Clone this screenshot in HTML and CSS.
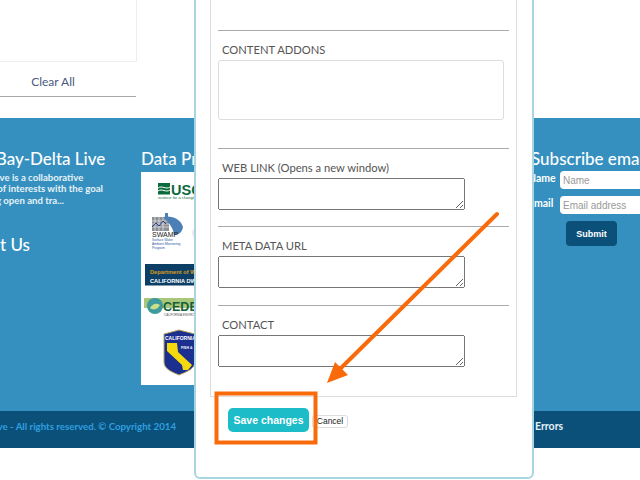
FILE: index.html
```html
<!DOCTYPE html>
<html lang="en">
<head>
    <meta charset="UTF-8">
    <title>Edit Content</title>
    <link rel="stylesheet" href="styles.css">
</head>
<body>
    <div class="top">
        <div class="filter-panel"></div>
        <div class="clear-all">Clear All</div>
    </div>
    <div class="footer-main">
        <div class="col-about">
            <h3>About Bay-Delta Live</h3>
            <p>Bay-Delta Live is a collaborative<br>wide group of interests with the goal<br>of sustaining open and tra...</p>
            <h3 class="contact">Contact Us</h3>
        </div>
        <div class="col-data">
            <h3>Data Providers</h3>
            <div class="logos">
                <svg width="100" height="213" viewBox="141 172 100 213" font-family="'Liberation Sans', sans-serif">
                    <!-- usgs -->
                    <rect x="158" y="183" width="12" height="11.500" fill="#0b6b3d"/>
                    <path d="M158 188c4-3 8 2 12-1M158 191c4-3 8 2 12-1" stroke="#fff" fill="none"/>
                    <text x="171" y="195" font-size="14.500" font-weight="bold" fill="#0b6b3d">USGS</text>
                    <text x="158" y="199" font-size="4" fill="#0b6b3d">science for a changing world</text>
                    <!-- swamp -->
                    <rect x="152" y="217" width="17" height="14" fill="#8d8f96"/>
                    <path d="M152 221h17M152 224h17M152 227h17M155 217v14M159 217v14M163 217v14" stroke="#e8e8e8" stroke-width=".7"/>
                    <path d="M152 227l4-4 3 3 4-5 3 3" stroke="#23408e" fill="none"/>
                    <path d="M163 217c8-2 18 2 20 10-1 6-5 8-9 8 0-5-4-12-11-18z" fill="#4c7fb5"/>
                    <path d="M165 213h3v4h-3z" fill="#4c7fb5"/>
                    <text x="152" y="237" font-size="7" fill="#222">SWAMP</text>
                    <text x="152" y="241" font-size="3.300" fill="#2a5aa0">Surface Water</text>
                    <text x="152" y="245" font-size="3.300" fill="#2a5aa0">Ambient Monitoring</text>
                    <text x="152" y="249" font-size="3.300" fill="#2a5aa0">Program</text>
                    <circle cx="198" cy="233" r="6" fill="#e9e9e9"/>
                    <!-- dwr -->
                    <rect x="145" y="264" width="90" height="21.500" fill="#0d3f66"/>
                    <text x="150" y="273.500" font-size="5.700" font-weight="bold" fill="#d99a1c">Department of Water Resources</text>
                    <text x="150" y="282.500" font-size="5.700" font-weight="bold" fill="#fff">CALIFORNIA DWR</text>
                    <!-- ceden -->
                    <rect x="144" y="298" width="90" height="10" fill="#a9c77a"/>
                    <circle cx="155" cy="306" r="8" fill="#3f9a9e"/>
                    <path d="M150 308c3-5 7-5 10-3-2 4-6 6-10 3z" fill="#c7e08a"/>
                    <text x="163" y="311" font-size="12.500" font-weight="bold" fill="#14603a">CEDEN</text>
                    <text x="164" y="316" font-size="3" fill="#555">CALIFORNIA ENVIRONMENTAL</text>
                    <!-- fish and wildlife -->
                    <path d="M164 334l15-4 16 4v28c0 7-9 10-16 13-7-3-15-6-15-13z" fill="#1b2f8f" stroke="#b8a45a"/>
                    <path d="M167 343h10l1 9 14 13-4 5h-5l-1-5-15-14z" fill="#f5d90f"/>
                    <text x="165" y="340" font-size="5" font-weight="bold" fill="#fff">CALIFORNIA</text>
                    <text x="181" y="349" font-size="3.500" font-weight="bold" fill="#fff">FISH &amp;</text>
                </svg>
            </div>
        </div>
        <div class="col-subscribe">
            <h3>Subscribe email</h3>
            <div class="sub-row">
                <label>Name</label>
                <input class="sub-input" type="text" placeholder="Name">
            </div>
            <div class="sub-row">
                <label>Email</label>
                <input class="sub-input" type="text" placeholder="Email address">
            </div>
            <button class="submit-btn">Submit</button>
        </div>
    </div>
    <div class="footer-bar">
        <span class="copyright">Bay-Delta Live - All rights reserved. © Copyright 2014</span>
        <span class="errors">Errors</span>
    </div>

    <div class="modal">
        <div class="form-box">
            <div class="field field-first">
                <label>CONTENT ADDONS</label>
                <div class="rich-box"></div>
            </div>
            <div class="field">
                <label>WEB LINK (Opens a new window)</label>
                <textarea></textarea>
            </div>
            <div class="field field-meta">
                <label>META DATA URL</label>
                <textarea></textarea>
            </div>
            <div class="field field-last">
                <label>CONTACT</label>
                <textarea></textarea>
            </div>
        </div>
        <div class="actions">
            <button class="save-btn">Save changes</button>
            <button class="cancel-btn">Cancel</button>
        </div>
    </div>

    <svg class="annotation" width="640" height="480" viewBox="0 0 640 480">
        <rect x="216.500" y="393.500" width="99" height="49" fill="none" stroke="#f96a0a" stroke-width="4"/>
        <line x1="497" y1="214" x2="340" y2="369" stroke="#f96a0a" stroke-width="4" stroke-linecap="round"/>
        <polygon points="327,383 335,362 348,375" fill="#f96a0a"/>
    </svg>
</body>
</html>
```

FILE: styles.css
```css
* {
    box-sizing: border-box;
}

body {
    margin: 0;
    width: 640px;
    height: 480px;
    overflow: hidden;
    position: relative;
    background-color: #fff;
    font-family: Lato, sans-serif;
}

h3 {
    margin: 0;
    font-size: 17px;
    line-height: 20px;
    font-weight: 500;
    color: #fff;
    white-space: nowrap;
}

.top {
    height: 118px;
    width: 166px;
    margin-left: -30px;
}

.filter-panel {
    height: 62px;
    width: 167px;
    border-right: 1px solid #eee;
    border-bottom: 1px solid #eee;
}

.clear-all {
    width: 166px;
    height: 35px;
    line-height: 40px;
    text-align: center;
    font-size: 12px;
    color: #4a5a82;
    border-bottom: 1px solid #aaa;
}

.footer-main {
    display: flex;
    height: 293px;
    padding: 31px 0 0 0;
    margin-left: -55px;
    background-color: #3590bf;
}

.col-about {
    width: 196px;
    flex: none;
}

.col-about p {
    margin: 3px 0 0 2px;
    font-size: 9.600px;
    line-height: 11.300px;
    font-weight: 700;
    color: #e6f2f8;
    white-space: nowrap;
}

.contact {
    margin-top: 29px;
    margin-left: 2px;
}

.col-data {
    width: 390px;
    flex: none;
}

.logos {
    width: 100px;
    height: 213px;
    margin-top: 3px;
    background-color: #fff;
}

.logos svg {
    display: block;
}

.col-subscribe {
    flex: none;
    width: 170px;
}

.sub-row {
    display: flex;
    align-items: center;
    margin-top: 2px;
    margin-bottom: 7px;
    margin-left: -3px;
    height: 18px;
    gap: 4px;
}

.sub-row label {
    width: 28px;
    font-size: 10.500px;
    font-weight: 700;
    color: #fff;
    margin-top: -4px;
}

.sub-input {
    width: 120px;
    height: 18px;
    padding: 0 3px;
    border: none;
    border-radius: 4px;
    font-family: "Liberation Sans", sans-serif;
    font-size: 10px;
    background-color: #fff;
}

.sub-input::placeholder {
    color: #999;
}

.submit-btn {
    display: block;
    width: 51px;
    height: 25px;
    margin-left: 35px;
    border: none;
    border-radius: 4px;
    background-color: #0b5078;
    color: #fff;
    font-family: "Liberation Sans", sans-serif;
    font-size: 9px;
    font-weight: bold;
}

.footer-bar {
    display: flex;
    height: 37px;
    line-height: 31px;
    background-color: #0b5078;
    font-size: 9.700px;
    white-space: nowrap;
    margin-left: -85px;
}

.copyright {
    width: 261px;
    flex: none;
    text-align: right;
    font-weight: 700;
    color: #2f9fe0;
}

.errors {
    margin-left: 359px;
    font-size: 10.500px;
    font-weight: 700;
    color: #e6f2f8;
}

/* edit dialog, sits over the page */
.modal {
    position: absolute;
    left: 194px;
    top: -20px;
    width: 340px;
    height: 499px;
    padding: 0 15px 0 14px;
    background-color: #fff;
    border: 2px solid #a9d5e2;
    border-radius: 6px;
}

.form-box {
    height: 415px;
    padding: 48px 7px 0 7px;
    border: 1px solid #ddd;
    border-top: none;
}

.field {
    border-top: 1px solid #aaa;
    padding: 12px 0 16px 0;
}

.field label {
    display: block;
    height: 14px;
    margin-bottom: 3px;
    padding-left: 4px;
    font-size: 11.200px;
    line-height: 14px;
    color: #555;
}

.field textarea {
    display: block;
    width: 247px;
    height: 32px;
    padding: 0;
}

.field-first {
    padding-bottom: 28px;
}

.field-meta {
    padding-bottom: 17px;
}

.field-last {
    padding-bottom: 0;
}

.rich-box {
    width: 286px;
    height: 60px;
    border: 1px solid #ddd;
    border-radius: 3px;
}

.actions {
    display: flex;
    align-items: center;
    gap: 3px;
    padding: 11px 0 0 18px;
}

.save-btn {
    width: 81px;
    height: 24px;
    padding: 0;
    border: none;
    border-radius: 5px;
    background-color: #1cbcc8;
    color: #fff;
    font-family: "Liberation Sans", sans-serif;
    font-size: 10.500px;
    font-weight: bold;
    white-space: nowrap;
}

.cancel-btn {
    width: 36px;
    height: 13px;
    margin-top: 2px;
    padding: 0;
    border: 1px solid #ddd;
    border-radius: 3px;
    background-color: #fff;
    color: #222;
    font-family: "Liberation Sans", sans-serif;
    font-size: 8.500px;
}

.annotation {
    position: absolute;
    left: 0;
    top: 0;
    pointer-events: none;
}
```
